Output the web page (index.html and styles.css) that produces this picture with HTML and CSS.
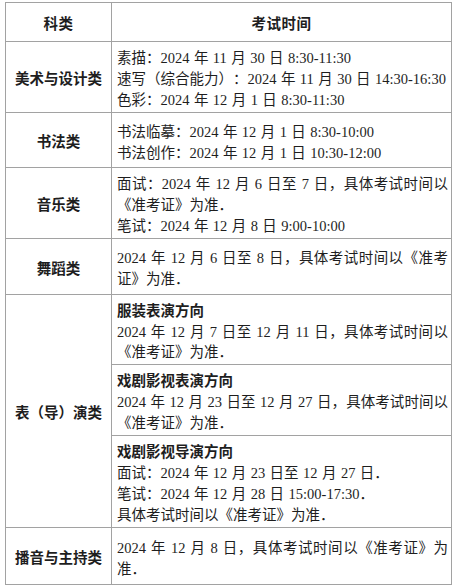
FILE: index.html
```html
<!DOCTYPE html>
<html lang="zh-CN">
<head>
<meta charset="utf-8">
<title>考试时间</title>
<link rel="stylesheet" href="styles.css">
</head>
<body>
<div class="sheet">
  <div class="cell head">科类</div>
  <div class="cell head">考试时间</div>

  <div class="cell label">美术与设计类</div>
  <div class="cell body">
    <span class="ln">素描：2024 年 11 月 30 日 8:30-11:30</span>
    <span class="ln">速写（综合能力）：2024 年 11 月 30 日 14:30-16:30</span>
    <span class="ln">色彩：2024 年 12 月 1 日 8:30-11:30</span>
  </div>

  <div class="cell label">书法类</div>
  <div class="cell body">
    <span class="ln">书法临摹：2024 年 12 月 1 日 8:30-10:00</span>
    <span class="ln">书法创作：2024 年 12 月 1 日 10:30-12:00</span>
  </div>

  <div class="cell label">音乐类</div>
  <div class="cell body">
    <span class="ln j">面试：2024 年 12 月 6 日至 7 日，具体考试时间以</span>
    <span class="ln">《准考证》为准．</span>
    <span class="ln">笔试：2024 年 12 月 8 日 9:00-10:00</span>
  </div>

  <div class="cell label">舞蹈类</div>
  <div class="cell body">
    <span class="ln j">2024 年 12 月 6 日至 8 日，具体考试时间以《准考</span>
    <span class="ln">证》为准．</span>
  </div>

  <div class="cell label span3">表（导）演类</div>
  <div class="cell body">
    <span class="ln sub">服装表演方向</span>
    <span class="ln j">2024 年 12 月 7 日至 12 月 11 日，具体考试时间以</span>
    <span class="ln">《准考证》为准．</span>
  </div>
  <div class="cell body">
    <span class="ln sub">戏剧影视表演方向</span>
    <span class="ln j">2024 年 12 月 23 日至 12 月 27 日，具体考试时间以</span>
    <span class="ln">《准考证》为准．</span>
  </div>
  <div class="cell body">
    <span class="ln sub">戏剧影视导演方向</span>
    <span class="ln">面试：2024 年 12 月 23 日至 12 月 27 日．</span>
    <span class="ln">笔试：2024 年 12 月 28 日 15:00-17:30．</span>
    <span class="ln">具体考试时间以《准考证》为准．</span>
  </div>

  <div class="cell label">播音与主持类</div>
  <div class="cell body">
    <span class="ln j">2024 年 12 月 8 日，具体考试时间以《准考证》为</span>
    <span class="ln">准．</span>
  </div>
</div>
</body>
</html>
```

FILE: styles.css
```css
html, body {
  margin: 0;
  padding: 0;
  background: #ffffff;
}

body {
  font-family: "Liberation Serif", "Noto Sans CJK SC", serif;
  font-size: 14.5px;
  line-height: 20.8px;
  color: #1e1e1e;
  text-spacing-trim: space-all;
}

.sheet {
  display: grid;
  grid-template-columns: 105px 339px;
  grid-template-rows: 38px 70px 54px 70px 55px 69px 70px 91px 56px;
  gap: 1px;
  padding: 1px;
  width: 445px;
  margin: 2px 0 0 5px;
  background: #a2a2a2;
}

.cell {
  background: #ffffff;
  display: flex;
  flex-direction: column;
  justify-content: center;
  padding-top: 5px;
  box-sizing: border-box;
}

.head,
.label {
  align-items: center;
  font-weight: bold;
}

.head {
  letter-spacing: 0.5px;
}

.span3 {
  grid-row: span 3;
}

.body {
  padding: 5px 3px 0 5px;
  word-spacing: 0.8px;
}

.ln {
  display: block;
}

.ln.j {
  text-align: justify;
  text-align-last: justify;
}

.sub {
  font-weight: bold;
  word-spacing: 0;
}
```
